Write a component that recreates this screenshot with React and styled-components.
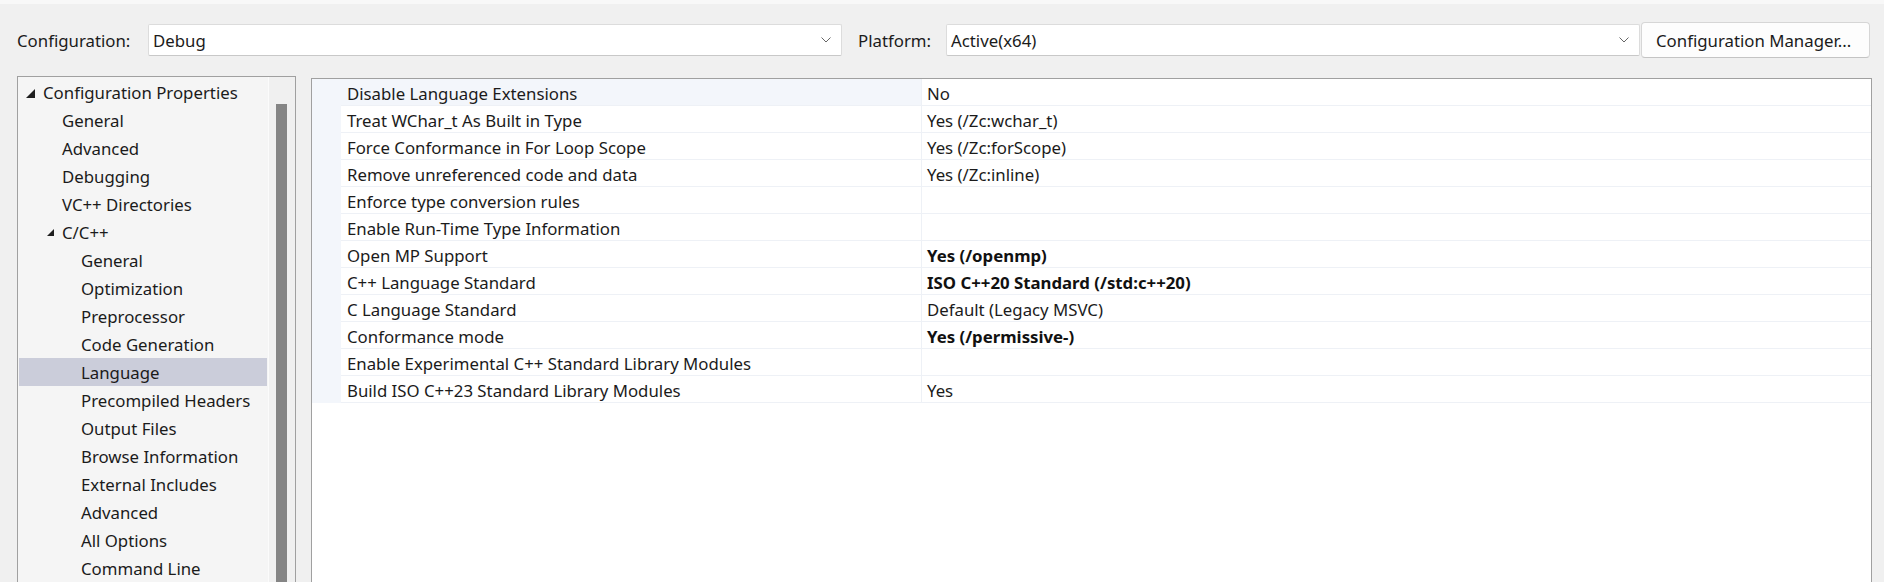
import React from "react";
import styled, { createGlobalStyle } from "styled-components";

const GlobalStyle = createGlobalStyle`
  html, body {
    margin: 0;
    padding: 0;
  }
  body {
    background: #f0f0f0;
    font-family: "Noto Sans", "Open Sans", sans-serif;
    font-size: 16.8px;
    color: #1b1b1b;
    overflow: hidden;
  }
`;

const Page = styled.div`
  width: 1884px;
  height: 582px;
  box-sizing: border-box;
  border-top: 4px solid #f8f8f8;
  display: flex;
  flex-direction: column;
  overflow: hidden;
`;

const Toolbar = styled.div`
  display: flex;
  align-items: center;
  height: 72px;
  flex-shrink: 0;
  padding: 0 14px 0 17px;
`;

const Label = styled.span`
  width: ${p => p.width}px;
  margin-left: ${p => p.offset || 0}px;
  flex-shrink: 0;
  white-space: nowrap;
`;

const Combo = styled.div`
  flex: 1;
  height: 32px;
  box-sizing: border-box;
  display: flex;
  align-items: center;
  justify-content: space-between;
  padding: 0 10px 0 4px;
  background: #fff;
  border: 1px solid #dcdcdc;
  border-bottom-color: #c8c8c8;
  border-radius: 2px;
`;

const Button = styled.div`
  width: 229px;
  height: 36px;
  box-sizing: border-box;
  flex-shrink: 0;
  display: flex;
  align-items: center;
  padding-left: 14px;
  margin-left: 1px;
  background: #fdfdfd;
  border: 1px solid #d6d6d6;
  border-bottom-color: #c4c4c4;
  border-radius: 4px;
  white-space: nowrap;
`;

const Main = styled.div`
  display: flex;
  align-items: flex-start;
  gap: 15px;
  padding: 0 12px 0 17px;
`;

const TreePanel = styled.div`
  width: 279px;
  height: 540px;
  flex-shrink: 0;
  box-sizing: border-box;
  display: flex;
  border: 1px solid #a0a0a0;
  background: #f5f5f5;
`;

const TreeList = styled.div`
  flex: 1;
  padding: 1px 1px 0;
`;

const TreeItem = styled.div`
  height: 28px;
  display: flex;
  align-items: center;
  padding-left: ${p => 7 + p.level * 19}px;
  background: ${p => (p.selected ? "#cbcdda" : "transparent")};
  white-space: nowrap;
`;

const Expander = styled.span`
  width: 17px;
  height: 28px;
  flex-shrink: 0;
  display: flex;
  align-items: center;
  padding-top: ${p => (p.big ? 3 : 1)}px;
  padding-left: ${p => (p.big ? 0 : 2)}px;
  box-sizing: border-box;
`;

const ScrollTrack = styled.div`
  width: 26px;
  flex-shrink: 0;
  background: #f0f0f0;
  border-left: 1px solid #fbfbfb;
  padding-top: 27px;
`;

const Thumb = styled.div`
  width: 11px;
  height: 480px;
  margin-left: 7px;
  background: #858585;
`;

const GridPanel = styled.div`
  flex: 1;
  height: 540px;
  margin-top: 2px;
  box-sizing: border-box;
  border: 1px solid #a0a0a0;
  background: #fff;
`;

const Row = styled.div`
  display: grid;
  grid-template-columns: 29px 581px 1fr;
  height: 27px;
`;

const Gutter = styled.div`
  background: #f3f6fb;
`;

const Cell = styled.div`
  box-sizing: border-box;
  display: flex;
  align-items: center;
  padding-left: ${p => (p.value ? 5 : 6)}px;
  padding-top: 2px;
  border-bottom: 1px solid #eef1f6;
  border-right: ${p => (p.value ? "none" : "1px solid #eef1f6")};
  background: ${p => (p.active ? "#f3f6fb" : "#fff")};
  font-weight: ${p => (p.bold ? 700 : 400)};
  color: ${p => (p.bold ? "#111" : "#1b1b1b")};
  white-space: nowrap;
  overflow: hidden;
`;

const Chevron = () => (
  <svg width="10" height="6" viewBox="0 0 10 6">
    <polyline points="0.5,0.5 5,5 9.5,0.5" fill="none" stroke="#666" strokeWidth="1" />
  </svg>
);

const Triangle = ({ size }) => (
  <svg width={size} height={size} viewBox={`0 0 ${size} ${size}`}>
    <polygon points={`${size},0 ${size},${size} 0,${size}`} fill="#1e1e1e" />
  </svg>
);

const tree = [
  { label: "Configuration Properties", level: 0, open: true },
  { label: "General", level: 1 },
  { label: "Advanced", level: 1 },
  { label: "Debugging", level: 1 },
  { label: "VC++ Directories", level: 1 },
  { label: "C/C++", level: 1, open: true },
  { label: "General", level: 2 },
  { label: "Optimization", level: 2 },
  { label: "Preprocessor", level: 2 },
  { label: "Code Generation", level: 2 },
  { label: "Language", level: 2, selected: true },
  { label: "Precompiled Headers", level: 2 },
  { label: "Output Files", level: 2 },
  { label: "Browse Information", level: 2 },
  { label: "External Includes", level: 2 },
  { label: "Advanced", level: 2 },
  { label: "All Options", level: 2 },
  { label: "Command Line", level: 2 }
];

const props = [
  { name: "Disable Language Extensions", value: "No" },
  { name: "Treat WChar_t As Built in Type", value: "Yes (/Zc:wchar_t)" },
  { name: "Force Conformance in For Loop Scope", value: "Yes (/Zc:forScope)" },
  { name: "Remove unreferenced code and data", value: "Yes (/Zc:inline)" },
  { name: "Enforce type conversion rules", value: "" },
  { name: "Enable Run-Time Type Information", value: "" },
  { name: "Open MP Support", value: "Yes (/openmp)", bold: true },
  { name: "C++ Language Standard", value: "ISO C++20 Standard (/std:c++20)", bold: true },
  { name: "C Language Standard", value: "Default (Legacy MSVC)" },
  { name: "Conformance mode", value: "Yes (/permissive-)", bold: true },
  { name: "Enable Experimental C++ Standard Library Modules", value: "" },
  { name: "Build ISO C++23 Standard Library Modules", value: "Yes" }
];

export default function App() {
  return (
    <Page>
      <GlobalStyle />
      <Toolbar>
        <Label width={131}>Configuration:</Label>
        <Combo>
          <span>Debug</span>
          <Chevron />
        </Combo>
        <Label width={88} offset={16}>Platform:</Label>
        <Combo>
          <span>Active(x64)</span>
          <Chevron />
        </Combo>
        <Button>Configuration Manager...</Button>
      </Toolbar>
      <Main>
        <TreePanel>
          <TreeList>
            {tree.map((t, i) => (
              <TreeItem key={i} level={t.level} selected={t.selected}>
                <Expander big={t.level === 0}>
                  {t.open && <Triangle size={t.level === 0 ? 9 : 7} />}
                </Expander>
                {t.label}
              </TreeItem>
            ))}
          </TreeList>
          <ScrollTrack>
            <Thumb />
          </ScrollTrack>
        </TreePanel>
        <GridPanel>
          {props.map((p, i) => (
            <Row key={i}>
              <Gutter />
              <Cell active={i === 0}>{p.name}</Cell>
              <Cell value bold={p.bold}>{p.value}</Cell>
            </Row>
          ))}
        </GridPanel>
      </Main>
    </Page>
  );
}
